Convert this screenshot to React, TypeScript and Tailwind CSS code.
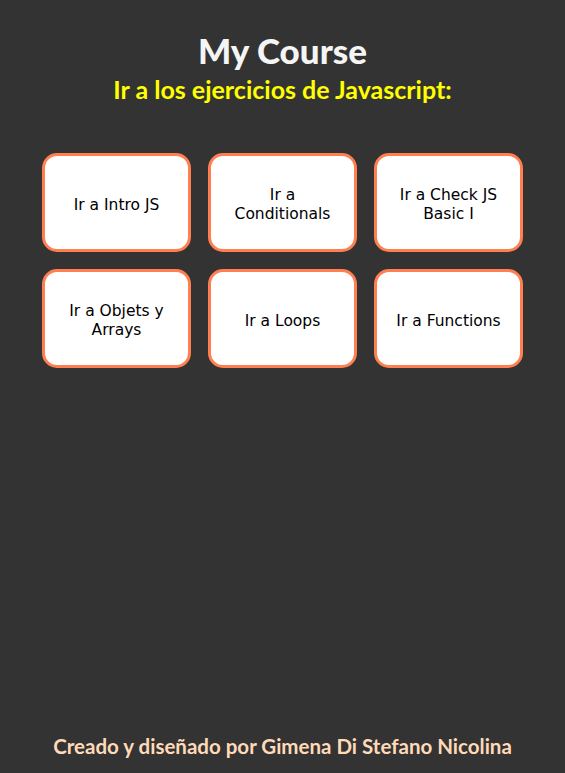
import React from "react";

const items = [
  ["Ir a Intro JS"],
  ["Ir a", "Conditionals"],
  ["Ir a Check JS", "Basic I"],
  ["Ir a Objets y", "Arrays"],
  ["Ir a Loops"],
  ["Ir a Functions"],
];

export default function App() {
  return (
    <div className="flex min-h-[773px] flex-col bg-[#333333]">
      <header className="flex flex-col items-center pt-[30px]">
        <h1
          className="text-[35px] font-black leading-[40px] text-[#f5f5f5]"
          style={{ fontFamily: "Lato, sans-serif" }}
        >
          My Course
        </h1>
        <h2
          className="mt-[4px] text-[25px] font-bold leading-[30px] text-[#ffff00]"
          style={{ fontFamily: "Lato, sans-serif" }}
        >
          Ir a los ejercicios de Javascript:
        </h2>
      </header>
      <main className="mt-[49px] grid grid-cols-[149px_149px_149px] justify-center gap-[17px]">
        {items.map((lines, i) => (
          <a
            key={i}
            href="#"
            className="flex h-[99px] flex-col items-center justify-center rounded-[15px] border-[3px] border-[#ff7f50] bg-white pt-[5px] text-center text-[15.5px] leading-[19px] text-black"
            style={{ fontFamily: "'DejaVu Sans', sans-serif" }}
          >
            {lines.map((l, j) => (
              <span key={j}>{l}</span>
            ))}
          </a>
        ))}
      </main>
      <footer className="mt-auto pb-[16px] text-center">
        <p
          className="text-[20.5px] font-bold leading-[22px] text-[#ffdab9]"
          style={{ fontFamily: "Lato, sans-serif" }}
        >
          Creado y diseñado por Gimena Di Stefano Nicolina
        </p>
      </footer>
    </div>
  );
}
